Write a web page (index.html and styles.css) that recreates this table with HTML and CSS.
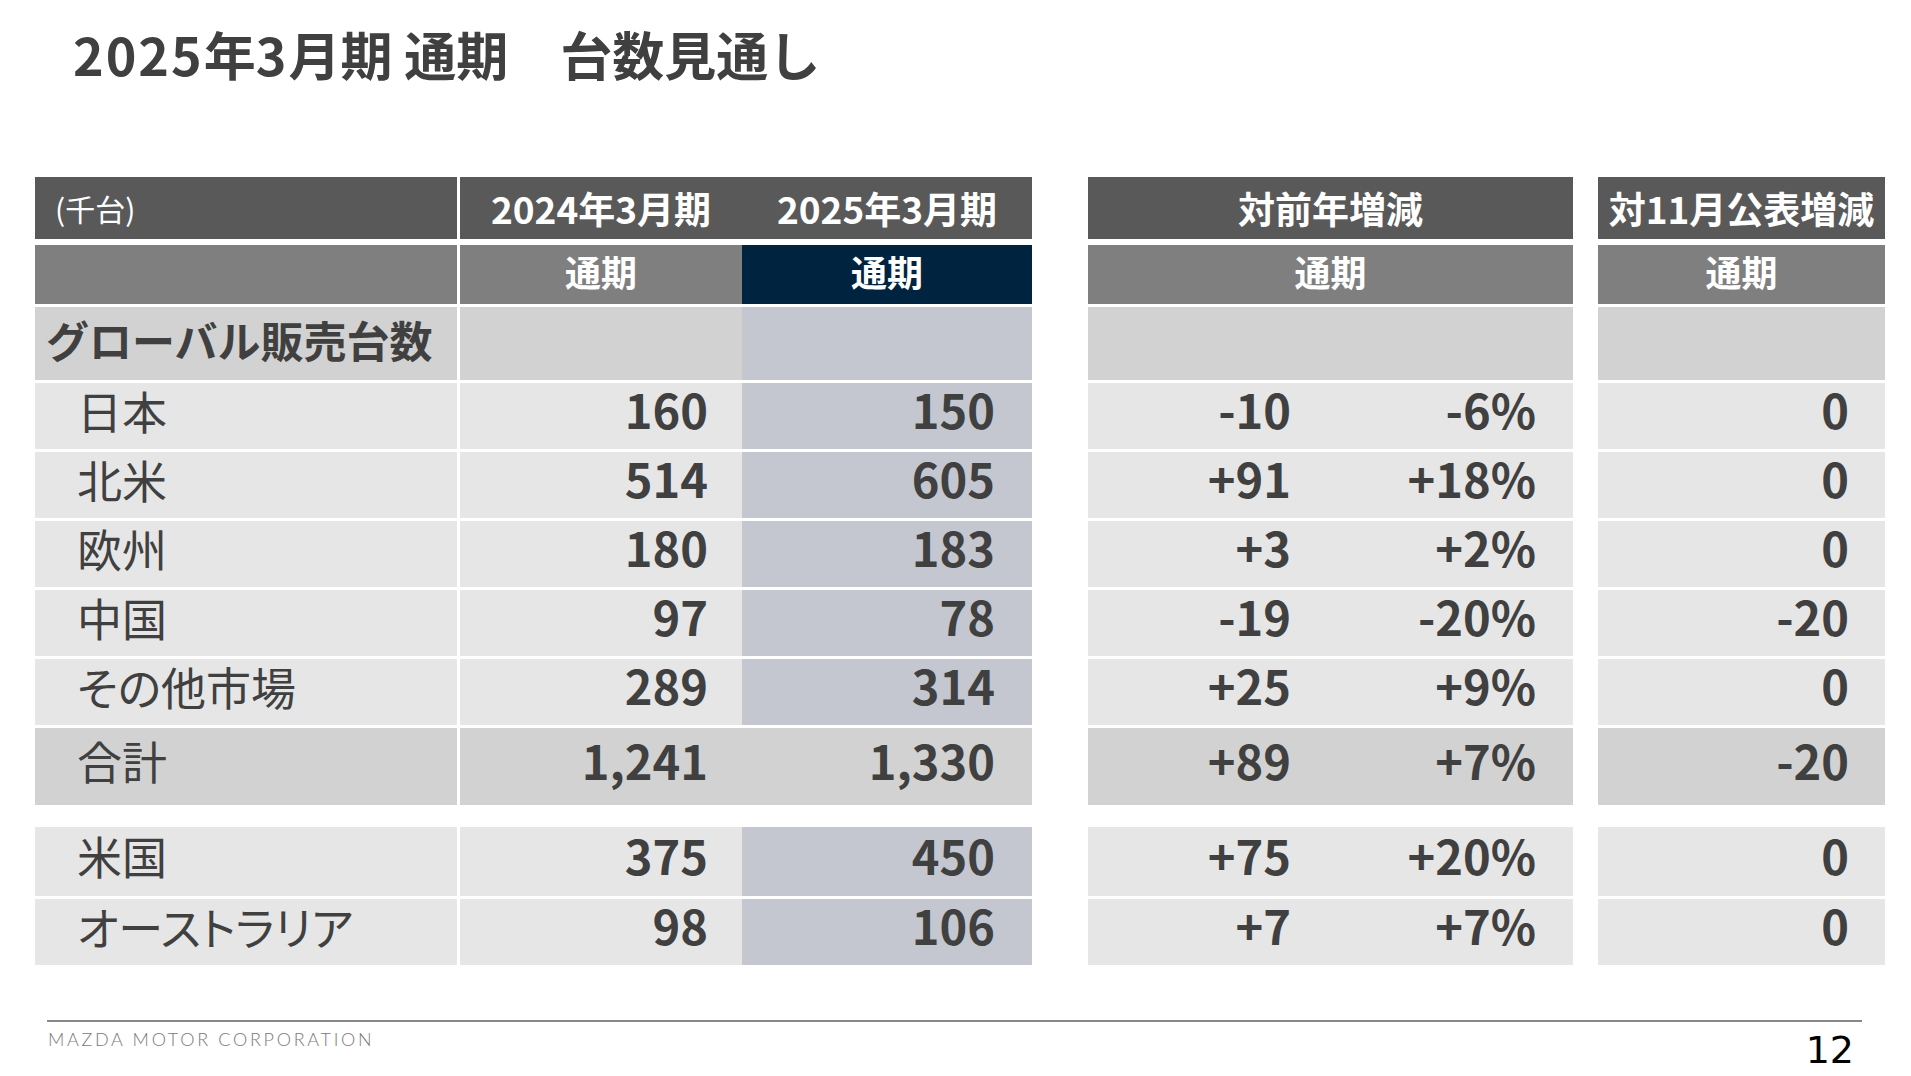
FILE: index.html
```html
<!DOCTYPE html>
<html lang="ja">
<head>
<meta charset="utf-8">
<title>2025年3月期 通期 台数見通し</title>
<link rel="stylesheet" href="styles.css">
</head>
<body>
<div class="slide">
  <h1 class="title"><span class="dg">2025</span>年<span class="dg">3</span>月期 通期　台数見通し</h1>

  <div class="table">
    <div class="row h1">
      <div class="cell c1 unit">(千台)</div>
      <div class="cell c2 ctr">2024年3月期</div>
      <div class="cell c3 ctr">2025年3月期</div>
      <div class="cell c4 ctr">対前年増減</div>
      <div class="cell c5 ctr">対11月公表増減</div>
    </div>
    <div class="row h2">
      <div class="cell c1"></div>
      <div class="cell c2 ctr">通期</div>
      <div class="cell c3 ctr navy">通期</div>
      <div class="cell c4 ctr">通期</div>
      <div class="cell c5 ctr">通期</div>
    </div>
    <div class="row sec">
      <div class="cell c1 seclabel">グローバル販売台数</div>
      <div class="cell c2"></div>
      <div class="cell c3"></div>
      <div class="cell c4"></div>
      <div class="cell c5"></div>
    </div>
    <div class="row data">
      <div class="cell c1 label">日本</div>
      <div class="cell c2 num">160</div>
      <div class="cell c3 num">150</div>
      <div class="cell c4 num2"><span class="d1">-10</span><span class="d2">-6%</span></div>
      <div class="cell c5 num">0</div>
    </div>
    <div class="row data">
      <div class="cell c1 label">北米</div>
      <div class="cell c2 num">514</div>
      <div class="cell c3 num">605</div>
      <div class="cell c4 num2"><span class="d1">+91</span><span class="d2">+18%</span></div>
      <div class="cell c5 num">0</div>
    </div>
    <div class="row data">
      <div class="cell c1 label">欧州</div>
      <div class="cell c2 num">180</div>
      <div class="cell c3 num">183</div>
      <div class="cell c4 num2"><span class="d1">+3</span><span class="d2">+2%</span></div>
      <div class="cell c5 num">0</div>
    </div>
    <div class="row data">
      <div class="cell c1 label">中国</div>
      <div class="cell c2 num">97</div>
      <div class="cell c3 num">78</div>
      <div class="cell c4 num2"><span class="d1">-19</span><span class="d2">-20%</span></div>
      <div class="cell c5 num">-20</div>
    </div>
    <div class="row data">
      <div class="cell c1 label">その他市場</div>
      <div class="cell c2 num">289</div>
      <div class="cell c3 num">314</div>
      <div class="cell c4 num2"><span class="d1">+25</span><span class="d2">+9%</span></div>
      <div class="cell c5 num">0</div>
    </div>
    <div class="row total">
      <div class="cell c1 label">合計</div>
      <div class="cell c2 num">1,241</div>
      <div class="cell c3 num">1,330</div>
      <div class="cell c4 num2"><span class="d1">+89</span><span class="d2">+7%</span></div>
      <div class="cell c5 num">-20</div>
    </div>
    <div class="row data us">
      <div class="cell c1 label">米国</div>
      <div class="cell c2 num">375</div>
      <div class="cell c3 num">450</div>
      <div class="cell c4 num2"><span class="d1">+75</span><span class="d2">+20%</span></div>
      <div class="cell c5 num">0</div>
    </div>
    <div class="row data">
      <div class="cell c1 label">オーストラリア</div>
      <div class="cell c2 num">98</div>
      <div class="cell c3 num">106</div>
      <div class="cell c4 num2"><span class="d1">+7</span><span class="d2">+7%</span></div>
      <div class="cell c5 num">0</div>
    </div>
  </div>

  <div class="footer">
    <span class="corp">MAZDA MOTOR CORPORATION</span>
    <span class="page">12</span>
  </div>
</div>
</body>
</html>
```

FILE: styles.css
```css
* { box-sizing: border-box; }
html, body {
  margin: 0;
  padding: 0;
  background: #ffffff;
}
body {
  font-family: "Noto Sans CJK JP", "Noto Sans", sans-serif;
  color: #404040;
}
.slide {
  width: 1911px;
  height: 1076px;
  padding-left: 35px;
  overflow: hidden;
}
.title {
  margin: 27px 0 0 38px;
  font-size: 52px;
  line-height: 54px;
  font-weight: 700;
  color: #404040;
  white-space: pre;
}
.title .dg {
  letter-spacing: 2px;
}
.table {
  margin-top: 96px;
  display: flex;
  flex-direction: column;
}
.row {
  display: flex;
}
.cell {
  display: flex;
  align-items: center;
  white-space: nowrap;
}
.c1 { width: 422px; }
.c2 { width: 282px; margin-left: 3px; }
.c3 { width: 290px; }
.c4 { width: 485px; margin-left: 56px; }
.c5 { width: 287px; margin-left: 25px; }

.ctr { justify-content: center; }

/* header rows */
.h1 { height: 62px; }
.h1 .cell {
  background: #595959;
  color: #ffffff;
  font-size: 37px;
  font-weight: 700;
  line-height: 1;
}
.h1 .unit {
  font-size: 30px;
  font-weight: 400;
  padding-left: 20px;
}
.h2 { height: 59px; margin-top: 6px; }
.h2 .cell {
  background: #7f7f7f;
  color: #ffffff;
  font-size: 36px;
  font-weight: 700;
  line-height: 1;
  padding-bottom: 7px;
}
.h2 .navy { background: #00233f; }

/* section row */
.sec { height: 73px; margin-top: 3px; }
.sec .cell { background: #d2d2d2; }
.sec .c3 { background: #c4c7d0; }
.seclabel {
  font-size: 43px;
  font-weight: 700;
  line-height: 1;
  padding-left: 11px;
  padding-bottom: 8px;
}

/* data rows */
.data { height: 66px; margin-top: 3px; }
.data .cell { background: #e6e6e6; }
.data .c3, .total .c3 { background: #c4c7d0; }
.total { height: 77px; margin-top: 3px; }
.total .cell { background: #d2d2d2; }
.us { height: 69px; margin-top: 22px; }

.label {
  font-size: 45px;
  font-weight: 400;
  line-height: 1;
  padding-left: 42px;
  padding-bottom: 12px;
  font-feature-settings: "palt";
}
.num, .num2 {
  font-size: 47px;
  font-weight: 700;
  line-height: 1;
  padding-bottom: 15px;
}
.num { justify-content: flex-end; }
.c2.num { padding-right: 34px; }
.c3.num { padding-right: 37px; }
.c5.num { padding-right: 36px; }
.num2 { padding-right: 37px; }
.num2 .d1 { width: 203px; text-align: right; }
.num2 .d2 { width: 245px; text-align: right; }

/* footer */
.footer {
  margin: 55px 49px 0 12px;
  border-top: 2px solid #888888;
  display: flex;
  justify-content: space-between;
  align-items: flex-start;
}
.corp {
  font-family: "Lato", "Liberation Sans", sans-serif;
  font-weight: 300;
  font-size: 18px;
  line-height: 18px;
  letter-spacing: 2.7px;
  color: #7a7a7a;
  margin-top: 8px;
  margin-left: 1px;
}
.page {
  font-family: "DejaVu Sans", "Verdana", sans-serif;
  font-size: 38px;
  line-height: 38px;
  color: #000000;
  margin-top: 9px;
  margin-right: 8px;
}
```
